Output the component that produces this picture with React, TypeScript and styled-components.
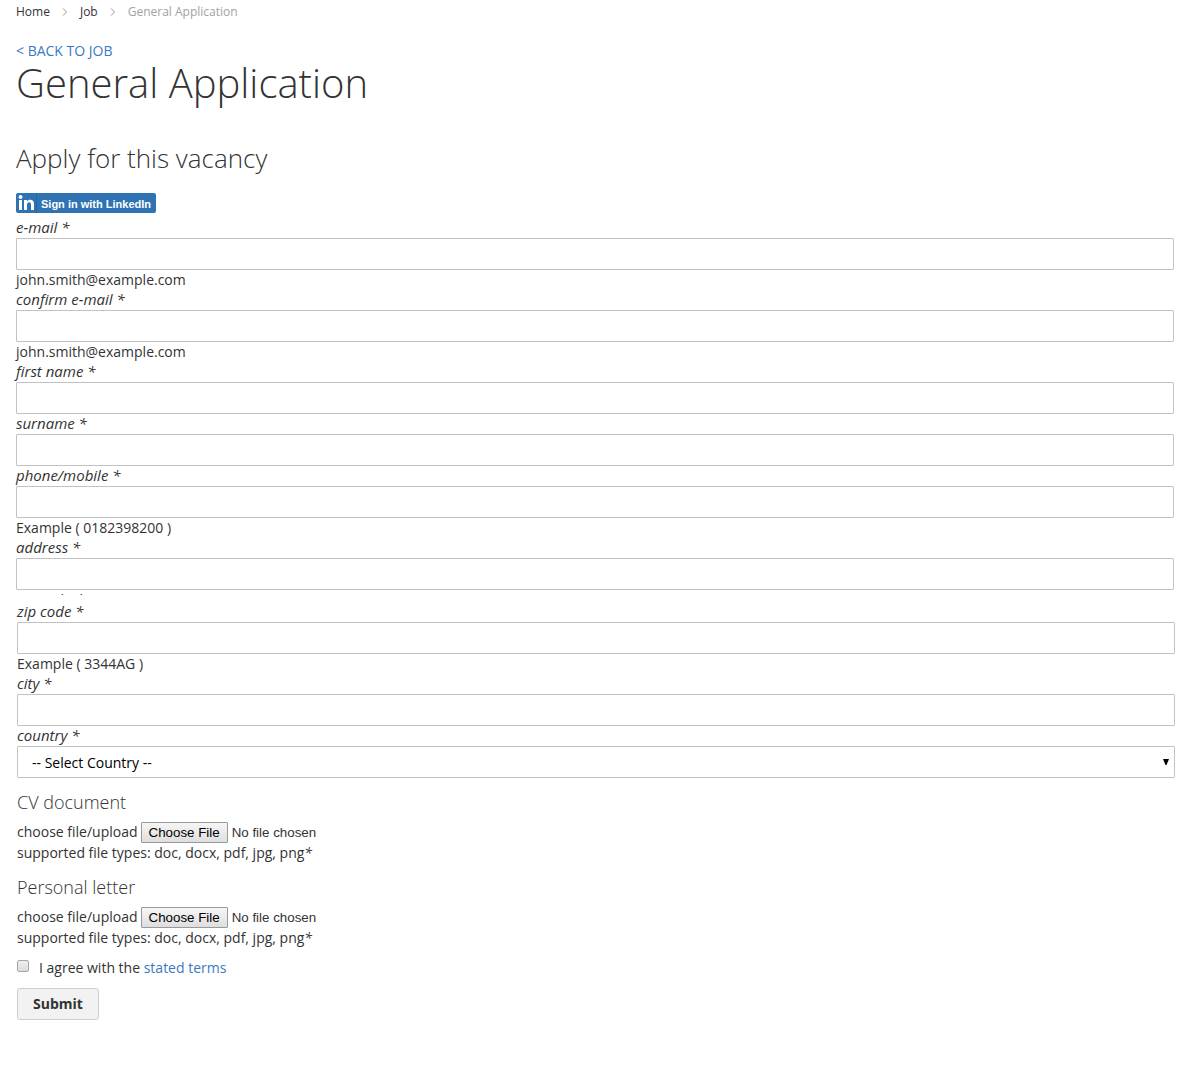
import React from "react";
import styled, { createGlobalStyle } from "styled-components";

const GlobalStyle = createGlobalStyle`
  *, *::before, *::after { box-sizing: border-box; }
  body {
    margin: 0;
    background: #fff;
    color: #333;
    font: 14px/20px "Open Sans", "Noto Sans", sans-serif;
  }
`;

const Page = styled.main`
  padding: 2px 28px 66px 16px;
`;

const Crumbs = styled.ol`
  display: flex;
  align-items: center;
  margin: 0 0 20px;
  padding: 0;
  list-style: none;
  font-size: 12px;
  line-height: 19px;
  color: #a3a3a3;
`;

const Crumb = styled.li`
  display: flex;
  align-items: center;
`;

const CrumbLink = styled.a`
  color: #333;
  text-decoration: none;
`;

const Chevron = styled.svg`
  width: 6px;
  height: 8px;
  margin: 0 12px;
  fill: none;
  stroke: #949494;
`;

const Link = styled.a`
  color: #3b78c3;
  text-decoration: none;
`;

const Title = styled.h1`
  margin: 0;
  font-size: 40px;
  font-weight: 300;
  line-height: 44px;
`;

const Subtitle = styled.h2`
  margin: 39px 0 21px;
  font-size: 26px;
  font-weight: 300;
  line-height: 28px;
`;

const LinkedInButton = styled.button`
  display: flex;
  align-items: center;
  height: 20px;
  margin: 0 0 5px;
  padding: 0 5px 0 0;
  border: 0;
  border-radius: 2px;
  background: #2f73b3;
  color: #fff;
  font: bold 11px/22px "Liberation Sans", Arial, sans-serif;
`;

const LinkedInMark = styled.svg`
  width: 21px;
  height: 20px;
  margin-right: 4px;
  border-right: 1px solid #28649d;
  fill: #fff;
`;

const ButtonText = styled.span`
  padding-top: 2px;
`;

const Label = styled.label`
  display: block;
  padding-bottom: 2px;
  font-size: 15px;
  font-style: italic;
  line-height: 18px;
`;

const fieldBox = `
  display: block;
  width: 100%;
  height: 32px;
  border: 1px solid #c2c2c2;
  border-radius: 1px;
  background: #fff;
  font: 14px/20px "Open Sans", "Noto Sans", sans-serif;
`;

const TextInput = styled.input`
  ${fieldBox}
  padding: 0 9px;
`;

const SelectWrap = styled.div`
  position: relative;
`;

const Select = styled.select`
  ${fieldBox}
  appearance: none;
  padding: 1px 24px 0 14px;
  color: #000;
`;

const SelectArrow = styled.svg`
  position: absolute;
  top: 12px;
  right: 6px;
  width: 6px;
  height: 7px;
  pointer-events: none;
`;

const ClippedHint = styled.div`
  height: 5px;
  margin-bottom: 7px;
  overflow: hidden;
`;

const LowerFields = styled.div`
  margin: 0 -1px 0 1px;
`;

const Upload = styled.section`
  margin-top: 15px;
`;

const UploadTitle = styled.h3`
  margin: 0 0 10px;
  font-size: 18px;
  font-weight: 300;
  line-height: 19px;
`;

const UploadRow = styled.div`
  display: flex;
  align-items: flex-start;
  gap: 3px;
  height: 21px;
`;

const FileInput = styled.input`
  width: 240px;
  height: 21px;
  color: #333;
  font-family: "Liberation Sans", Arial, sans-serif;
  line-height: 21px;

  &::file-selector-button {
    box-sizing: border-box;
    height: 21px;
    margin: 0 4px 0 0;
    padding: 1px 7px;
    border: 1px solid #999;
    border-radius: 1px;
    background: linear-gradient(#f6f6f6, #dedede);
    color: #000;
    font-family: "Liberation Sans", Arial, sans-serif;
    line-height: 17px;
  }
`;

const Terms = styled.div`
  display: flex;
  align-items: center;
  gap: 10px;
  margin: 10px 0;
`;

const Checkbox = styled.input`
  appearance: none;
  width: 12px;
  height: 12px;
  margin: 0 0 4px;
  border: 1px solid #a6a6a6;
  border-radius: 2px;
  background: linear-gradient(#eee, #dcdcdc);

  &:checked { background: #3b78c3; }
`;

const Submit = styled.button`
  height: 32px;
  padding: 0 15px;
  border: 1px solid #cdcdcd;
  border-radius: 3px;
  background: #f2f2f2;
  color: #333;
  font: bold 14px/16px "Open Sans", "Noto Sans", sans-serif;
`;

function Separator() {
  return (
    <Chevron viewBox="0 0 6 8" aria-hidden="true">
      <path d="M1 .5 4.5 4 1 7.5" />
    </Chevron>
  );
}

function Field({ id, label, hint, type = "text" }: { id: string; label: string; hint?: string; type?: string }) {
  return (
    <div>
      <Label htmlFor={id}>{label} *</Label>
      <TextInput id={id} name={id} type={type} />
      {hint && <div>{hint}</div>}
    </div>
  );
}

function FileUpload({ id, title }: { id: string; title: string }) {
  return (
    <Upload>
      <UploadTitle>{title}</UploadTitle>
      <UploadRow>
        <label htmlFor={id}>choose file/upload</label>
        <FileInput id={id} name={id} type="file" />
      </UploadRow>
      <div>supported file types: doc, docx, pdf, jpg, png<em>*</em></div>
    </Upload>
  );
}

export default function App() {
  return (
    <>
      <GlobalStyle />
      <Page>
        <nav aria-label="Breadcrumb">
          <Crumbs>
            <Crumb><CrumbLink href="#home">Home</CrumbLink><Separator /></Crumb>
            <Crumb><CrumbLink href="#job">Job</CrumbLink><Separator /></Crumb>
            <Crumb>General Application</Crumb>
          </Crumbs>
        </nav>
        <Link href="#job">&lt; BACK TO JOB</Link>
        <Title>General Application</Title>
        <Subtitle>Apply for this vacancy</Subtitle>
        <form onSubmit={(e) => e.preventDefault()}>
          <LinkedInButton type="button">
            <LinkedInMark viewBox="0 0 20 20" aria-hidden="true">
              <circle cx="4.5" cy="4" r="2" />
              <path d="M3 7h3v10H3zM8 7h3v1.4C11.7 7.3 12.8 6.7 14.2 6.7c2.7 0 3.8 1.7 3.8 4.4V17h-3v-5.3c0-1.5-.5-2.4-1.8-2.4-1.4 0-2.2 1-2.2 2.5V17H8z" />
            </LinkedInMark>
            <ButtonText>Sign in with LinkedIn</ButtonText>
          </LinkedInButton>
          <Field id="email" type="email" label="e-mail" hint="john.smith@example.com" />
          <Field id="confirm-email" type="email" label="confirm e-mail" hint="john.smith@example.com" />
          <Field id="first-name" label="first name" />
          <Field id="surname" label="surname" />
          <Field id="phone" type="tel" label="phone/mobile" hint="Example ( 0182398200 )" />
          <Field id="address" label="address" />
          <ClippedHint>Example (h)</ClippedHint>
          <LowerFields>
            <Field id="zip-code" label="zip code" hint="Example ( 3344AG )" />
            <Field id="city" label="city" />
            <Label htmlFor="country">country *</Label>
            <SelectWrap>
              <Select id="country" name="country" defaultValue="">
                <option value="">-- Select Country --</option>
              </Select>
              <SelectArrow viewBox="0 0 6 7" aria-hidden="true"><path d="M0 1h6L3.5 7h-1z" /></SelectArrow>
            </SelectWrap>
            <FileUpload id="cv" title="CV document" />
            <FileUpload id="letter" title="Personal letter" />
            <Terms>
              <Checkbox id="terms" name="terms" type="checkbox" />
              <label htmlFor="terms">I agree with the <Link href="#terms">stated terms</Link></label>
            </Terms>
            <Submit type="submit">Submit</Submit>
          </LowerFields>
        </form>
      </Page>
    </>
  );
}
